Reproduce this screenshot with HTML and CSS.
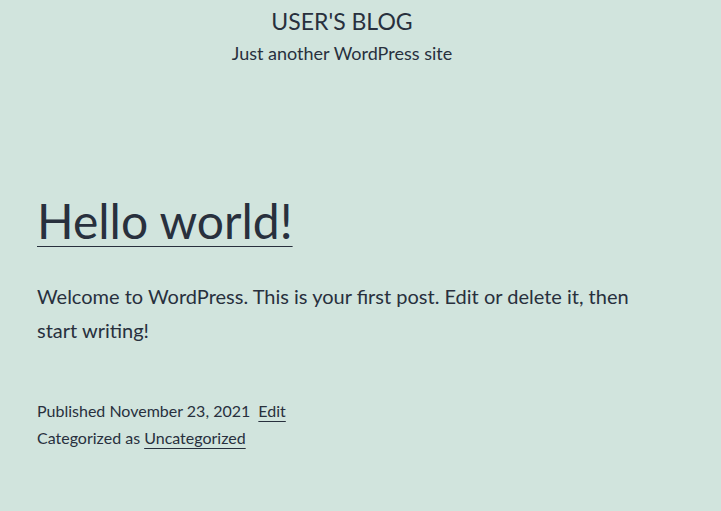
FILE: index.html
```html
<!DOCTYPE html>
<html lang="en">

<head>
    <meta charset="UTF-8">
    <meta name="viewport" content="width=device-width, initial-scale=1.0">
    <title>User's Blog</title>
    <link rel="stylesheet" href="styles.css">
</head>

<body>
    <header class="site-header">
        <p class="site-title"><a href="#">USER'S BLOG</a></p>
        <p class="site-description">Just another WordPress site</p>
    </header>

    <main class="site-main">
        <article class="post">
            <h2 class="entry-title"><a href="#">Hello world!</a></h2>
            <div class="entry-content">
                <p>Welcome to WordPress. This is your first post. Edit or delete it, then start writing!</p>
            </div>
            <footer class="entry-footer">
                <div class="posted-on">Published November 23, 2021 <a class="edit-link" href="#">Edit</a></div>
                <div class="cat-links">Categorized as <a href="#">Uncategorized</a></div>
            </footer>
        </article>
    </main>
</body>

</html>
```

FILE: styles.css
```css
body {
    font-family: Lato, 'Open Sans', sans-serif;
    background-color: #d1e4dd;
    color: #28303d;
    margin: 0;
}

a {
    color: #28303d;
}

.site-header {
    text-align: center;
    padding: 6px 37px 0 0;
}

.site-title {
    margin: 0;
    font-size: 23px;
    line-height: 30px;
}

.site-title a {
    text-decoration: none;
}

.site-description {
    margin: 5px 0 0;
    font-size: 18px;
    line-height: 24px;
}

.site-main {
    padding: 124px 37px 0;
}

.entry-title {
    margin: 0;
    font-size: 48px;
    font-weight: normal;
    line-height: 64px;
}

.entry-title a {
    text-decoration-thickness: 1px;
    text-underline-offset: 7px;
}

.entry-content p {
    margin: 26px 0 0;
    font-size: 20px;
    line-height: 34px;
    max-width: 610px;
}

.entry-footer {
    margin-top: 50px;
    font-size: 16px;
    line-height: 27px;
}

.entry-footer a {
    text-decoration-thickness: 1px;
    text-underline-offset: 4px;
}

.edit-link {
    margin-left: 4px;
}
```
